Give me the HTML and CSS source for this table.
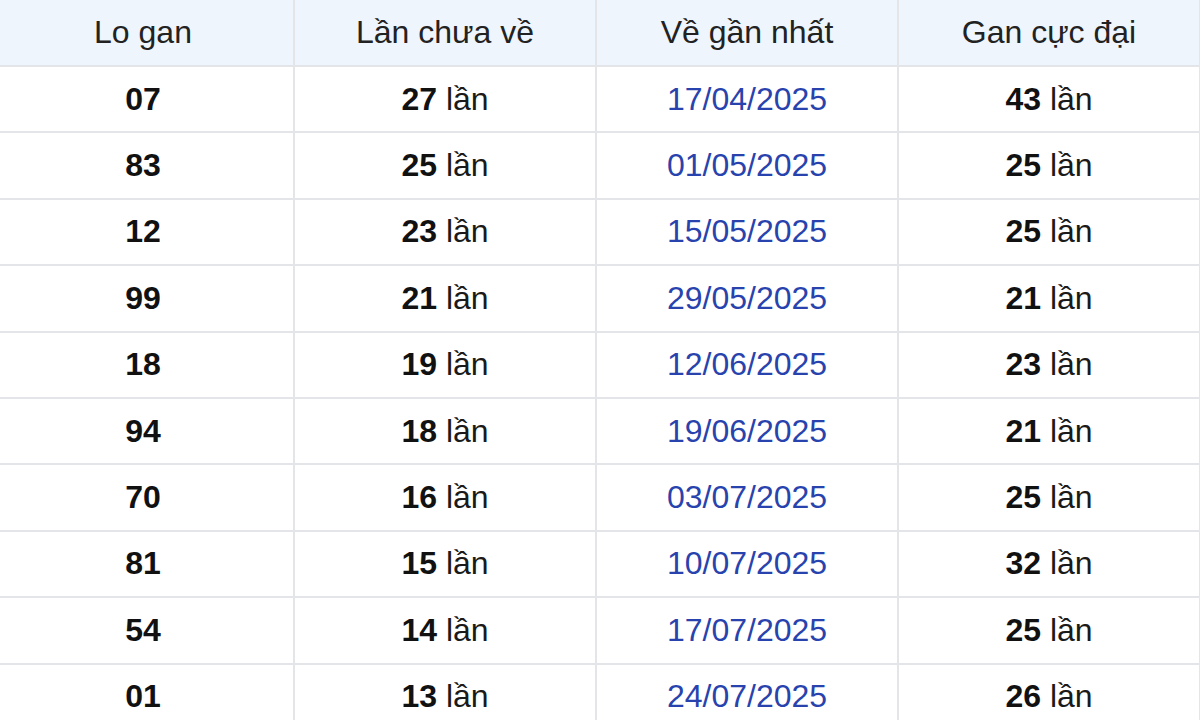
FILE: index.html
```html
<!DOCTYPE html>
<html lang="vi">
<head>
<meta charset="utf-8">
<link rel="stylesheet" href="styles.css">
</head>
<body>
<div class="wrap">
<table class="gan">
  <thead>
    <tr><th>Lo gan</th><th>Lần chưa về</th><th>Về gần nhất</th><th>Gan cực đại</th></tr>
  </thead>
  <tbody>
    <tr><td class="num">07</td><td><b>27</b> lần</td><td class="date">17/04/2025</td><td><b>43</b> lần</td></tr>
    <tr><td class="num">83</td><td><b>25</b> lần</td><td class="date">01/05/2025</td><td><b>25</b> lần</td></tr>
    <tr><td class="num">12</td><td><b>23</b> lần</td><td class="date">15/05/2025</td><td><b>25</b> lần</td></tr>
    <tr><td class="num">99</td><td><b>21</b> lần</td><td class="date">29/05/2025</td><td><b>21</b> lần</td></tr>
    <tr><td class="num">18</td><td><b>19</b> lần</td><td class="date">12/06/2025</td><td><b>23</b> lần</td></tr>
    <tr><td class="num">94</td><td><b>18</b> lần</td><td class="date">19/06/2025</td><td><b>21</b> lần</td></tr>
    <tr><td class="num">70</td><td><b>16</b> lần</td><td class="date">03/07/2025</td><td><b>25</b> lần</td></tr>
    <tr><td class="num">81</td><td><b>15</b> lần</td><td class="date">10/07/2025</td><td><b>32</b> lần</td></tr>
    <tr><td class="num">54</td><td><b>14</b> lần</td><td class="date">17/07/2025</td><td><b>25</b> lần</td></tr>
    <tr><td class="num">01</td><td><b>13</b> lần</td><td class="date">24/07/2025</td><td><b>26</b> lần</td></tr>
  </tbody>
</table>
</div>
</body>
</html>
```
FILE: styles.css
```css
html, body {
  margin: 0;
  padding: 0;
  background: #ffffff;
}
.wrap {
  width: 1200px;
  height: 720px;
  overflow: hidden;
}
.gan {
  width: 1210px;
  margin-left: -9px;
  border-collapse: collapse;
  table-layout: fixed;
  font-family: "Liberation Sans", Arial, sans-serif;
  font-size: 32px;
  color: #1a1a1a;
}
.gan th,
.gan td {
  border: 2px solid #e3e5e8;
  text-align: center;
  vertical-align: middle;
  padding: 0;
}
.gan thead tr {
  height: 66px;
}
.gan tbody tr {
  height: 66.4px;
}
.gan th {
  font-weight: normal;
  background: #eef5fc;
  color: #222222;
  border-top: none;
}
.gan td b,
.gan td.num {
  font-weight: bold;
  color: #111111;
}
.gan td.date {
  color: #2843ad;
}
```
